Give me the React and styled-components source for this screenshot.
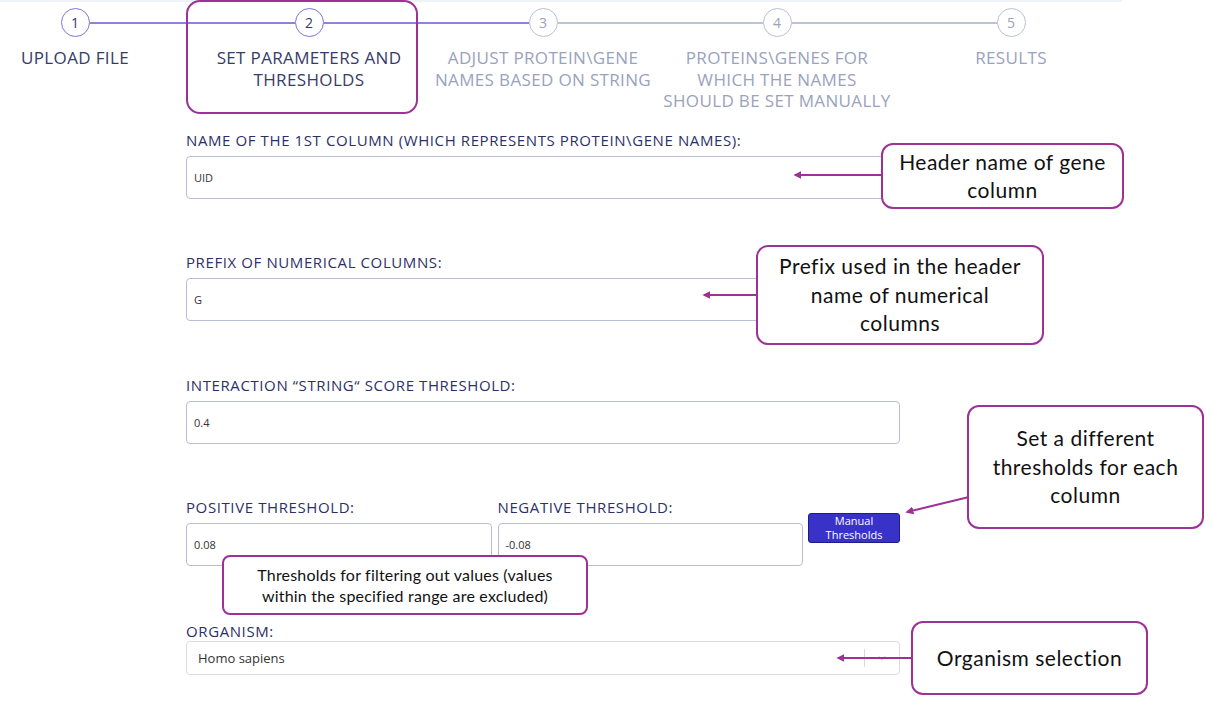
import styled, { createGlobalStyle } from 'styled-components';

const GlobalStyle = createGlobalStyle`
  body {
    margin: 0;
    background: #ffffff;
    font-family: "Open Sans", "Liberation Sans", sans-serif;
  }
`;

const ACCENT = '#9d3195';

const Page = styled.div`
  position: relative;
  width: 1214px;
  height: 720px;
  overflow: hidden;
  background: #fff;
`;

const TopBand = styled.div`
  width: 1122px;
  height: 2px;
  background: #eef2f9;
`;

const Stepper = styled.div`
  display: flex;
  margin-left: -42px;
  padding-top: 6px;
`;

const Step = styled.div`
  width: 234px;
  display: flex;
  flex-direction: column;
  align-items: center;
`;

const CircleRow = styled.div`
  width: 100%;
  display: flex;
  align-items: center;
`;

const Connector = styled.div`
  flex: 1;
  height: 2px;
  background: ${p => (p.$hidden ? 'transparent' : p.$done ? '#8c84dc' : '#bcc3d4')};
`;

const Circle = styled.div`
  width: 27px;
  height: 27px;
  border-radius: 50%;
  border: 1.5px solid ${p => (p.$done ? '#7f74d8' : '#b9c0d2')};
  color: ${p => (p.$done ? '#363a66' : '#9aa2bc')};
  display: flex;
  align-items: center;
  justify-content: center;
  font-size: 14px;
  font-weight: 500;
`;

const StepLabel = styled.div`
  margin-top: 10px;
  text-align: center;
  text-transform: uppercase;
  font-size: 17px;
  letter-spacing: 0.35px;
  line-height: 21.5px;
  white-space: nowrap;
  color: ${p => (p.$done ? '#373b69' : '#9aa2bd')};
`;

const Highlight = styled.div`
  position: absolute;
  left: 186px;
  top: 0;
  width: 228px;
  height: 110px;
  border: 2px solid ${ACCENT};
  border-radius: 14px;
`;

const Form = styled.div`
  margin-left: 186px;
  width: 714px;
  padding-top: 19px;
  display: flex;
  flex-direction: column;
  gap: 54.5px;
`;

const Field = styled.div`
  display: flex;
  flex-direction: column;
  flex: ${p => (p.$grow ? 1 : 'none')};
`;

const Label = styled.div`
  font-size: 15px;
  letter-spacing: 0.6px;
  line-height: 18px;
  color: #2d3068;
  margin-top: ${p => (p.$tight ? 1 : 0)}px;
  margin-bottom: ${p => (p.$tight ? 1 : 7)}px;
  white-space: nowrap;
`;

const Input = styled.div`
  height: 41px;
  border: 1px solid #b8bfd3;
  border-radius: 4px;
  display: flex;
  align-items: center;
  padding-left: 7px;
  font-size: 11px;
  color: #333;
`;

const Row = styled.div`
  display: flex;
  gap: 6px;
  align-items: flex-start;
`;

const ManualButton = styled.button`
  margin-top: 15px;
  margin-left: -1px;
  width: 92px;
  height: 30px;
  border: 1px solid #1f1b8a;
  border-radius: 3px;
  background: #3832c9;
  color: #fff;
  font-family: "Open Sans", sans-serif;
  font-size: 11px;
  line-height: 14px;
  padding: 0;
`;

const Select = styled.div`
  height: 32px;
  border: 1px solid #dcdcdc;
  border-radius: 4px;
  display: flex;
  align-items: center;
  padding-left: 11px;
  font-size: 13px;
  color: #333;
`;

const SelectValue = styled.span`
  flex: 1;
`;

const Separator = styled.span`
  width: 1px;
  height: 18px;
  background: #d8d8d8;
`;

const Chevron = styled.span`
  width: 34px;
  display: flex;
  justify-content: center;
  color: #ccc;
`;

const Callout = styled.div`
  position: absolute;
  box-sizing: border-box;
  border: 2px solid ${ACCENT};
  border-radius: 12px;
  background: #fff;
  display: flex;
  align-items: center;
  justify-content: center;
  text-align: center;
  white-space: nowrap;
  font-family: "Lato", "Liberation Sans", sans-serif;
  font-size: ${p => p.$size || 21}px;
  letter-spacing: ${p => p.$ls ?? 0.5}px;
  line-height: ${p => p.$lh || 28.5}px;
  color: #111;
`;

const Arrows = styled.svg`
  position: absolute;
  left: 0;
  top: 0;
  pointer-events: none;
`;

const steps = [
  { n: 1, label: ['Upload file'] },
  { n: 2, label: ['Set parameters and', 'thresholds'] },
  { n: 3, label: ['Adjust protein\\gene', 'names based on string'] },
  { n: 4, label: ['Proteins\\genes for', 'which the names', 'should be set manually'] },
  { n: 5, label: ['Results'] },
];

const arrows = [
  [881, 175, 795, 175],
  [756, 295, 704, 295],
  [969, 497, 907, 512],
  [911, 658, 838, 658],
];

export default function App() {
  return (
    <Page>
      <GlobalStyle />
      <TopBand />
      <Stepper>
        {steps.map((s, i) => (
          <Step key={s.n}>
            <CircleRow>
              <Connector $hidden={i === 0} $done={s.n <= 3} />
              <Circle $done={s.n <= 2}>{s.n}</Circle>
              <Connector $hidden={i === steps.length - 1} $done={s.n < 3} />
            </CircleRow>
            <StepLabel $done={s.n <= 2}>
              {s.label.map(l => (
                <div key={l}>{l}</div>
              ))}
            </StepLabel>
          </Step>
        ))}
      </Stepper>

      <Form>
        <Field>
          <Label>NAME OF THE 1ST COLUMN (WHICH REPRESENTS PROTEIN\GENE NAMES):</Label>
          <Input>UID</Input>
        </Field>
        <Field>
          <Label>PREFIX OF NUMERICAL COLUMNS:</Label>
          <Input>G</Input>
        </Field>
        <Field>
          <Label>INTERACTION “STRING“ SCORE THRESHOLD:</Label>
          <Input>0.4</Input>
        </Field>
        <Row>
          <Field $grow>
            <Label>POSITIVE THRESHOLD:</Label>
            <Input>0.08</Input>
          </Field>
          <Field $grow>
            <Label>NEGATIVE THRESHOLD:</Label>
            <Input>-0.08</Input>
          </Field>
          <ManualButton>
            Manual
            <br />
            Thresholds
          </ManualButton>
        </Row>
        <Field>
          <Label $tight>ORGANISM:</Label>
          <Select>
            <SelectValue>Homo sapiens</SelectValue>
            <Separator />
            <Chevron>
              <svg width="12" height="12" viewBox="0 0 20 20">
                <path d="M4.5 7.5 L10 13 L15.5 7.5" fill="none" stroke="currentColor" strokeWidth="2" />
              </svg>
            </Chevron>
          </Select>
        </Field>
      </Form>

      <Highlight />

      <Callout style={{ left: 881, top: 143, width: 243, height: 66 }}>
        Header name of gene
        <br />
        column
      </Callout>
      <Callout style={{ left: 756, top: 245, width: 288, height: 100 }}>
        Prefix used in the header
        <br />
        name of numerical
        <br />
        columns
      </Callout>
      <Callout style={{ left: 967, top: 405, width: 237, height: 124 }}>
        Set a different
        <br />
        thresholds for each
        <br />
        column
      </Callout>
      <Callout $size={16} $ls={0.2} $lh={21} style={{ left: 222, top: 555, width: 366, height: 60, borderRadius: 8 }}>
        Thresholds for filtering out values (values
        <br />
        within the specified range are excluded)
      </Callout>
      <Callout style={{ left: 911, top: 621, width: 237, height: 74 }}>Organism selection</Callout>

      <Arrows width="1214" height="720">
        <defs>
          <marker id="head" viewBox="0 0 10 10" refX="8" refY="5" markerWidth="4" markerHeight="4" orient="auto">
            <path d="M0 0 L10 5 L0 10 z" fill={ACCENT} />
          </marker>
        </defs>
        {arrows.map(([x1, y1, x2, y2]) => (
          <line
            key={`${x1}-${y1}`}
            x1={x1}
            y1={y1}
            x2={x2}
            y2={y2}
            stroke={ACCENT}
            strokeWidth="2"
            markerEnd="url(#head)"
          />
        ))}
      </Arrows>
    </Page>
  );
}
